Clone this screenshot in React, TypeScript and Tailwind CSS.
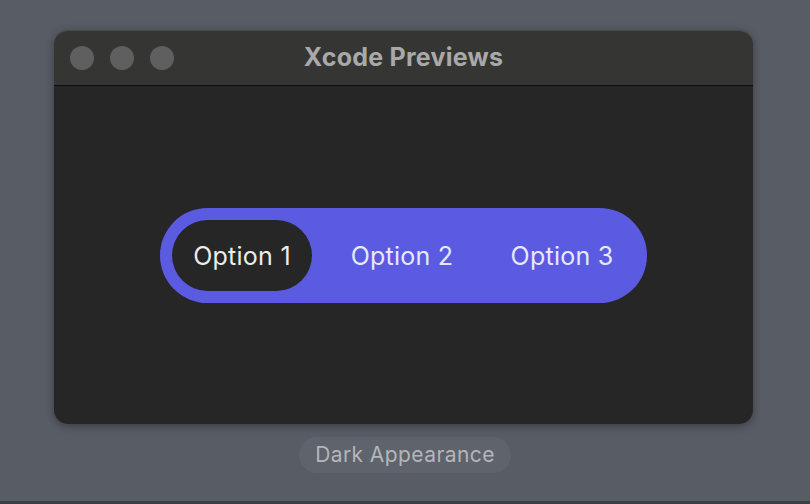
const FONT = { fontFamily: 'Inter, "Noto Sans", sans-serif' };

function TrafficLights() {
  return (
    <div className="flex items-center gap-4">
      <span className="h-6 w-6 rounded-full bg-[#5e5f5e]" />
      <span className="h-6 w-6 rounded-full bg-[#5e5f5e]" />
      <span className="h-6 w-6 rounded-full bg-[#5e5f5e]" />
    </div>
  );
}

const OPTIONS = ["Option 1", "Option 2", "Option 3"];

function Segmented({ selected = 0 }: { selected?: number }) {
  return (
    <div className="flex items-center gap-5 rounded-full bg-[#5b5be2] py-3 pl-3 pr-[15px]">
      {OPTIONS.map((o, i) => (
        <div
          key={o}
          className={
            i === selected
              ? "flex h-[71px] w-[140px] items-center justify-center rounded-full bg-[#262626] pt-[3px] text-[25px] tracking-[0.01em] text-[#ececec]"
              : "flex h-[71px] w-[140px] items-center justify-center rounded-full pt-[3px] text-[25px] tracking-[0.01em] text-[#e8e8fb]"
          }
        >
          {o}
        </div>
      ))}
    </div>
  );
}

export default function App() {
  return (
    <div
      className="flex h-[504px] w-full flex-col border-b-[3px] border-[#3b3e43] bg-[#585c65]"
      style={FONT}
    >
      <div className="ml-[54px] mt-[30px] flex h-[394px] w-[699px] flex-col overflow-hidden rounded-[14px] border-t border-[#4a4b49] shadow-[0_2px_8px_rgba(0,0,0,0.35)]">
        <div className="relative flex h-[55px] items-center border-b border-[#0e0e0e] bg-[#353634] px-4">
          <TrafficLights />
          <div className="absolute inset-0 flex items-center justify-center text-[25px] font-bold tracking-[0.01em] text-[#a9a9a9]">
            Xcode Previews
          </div>
        </div>
        <div className="flex flex-1 items-center justify-center bg-[#262626]">
          <Segmented />
        </div>
      </div>
      <div className="mx-auto mt-[13px] flex h-9 items-center rounded-full bg-[#5f636b] px-4 text-[21px] tracking-[0.02em] text-[#b3b6bb]">
        Dark Appearance
      </div>
    </div>
  );
}
